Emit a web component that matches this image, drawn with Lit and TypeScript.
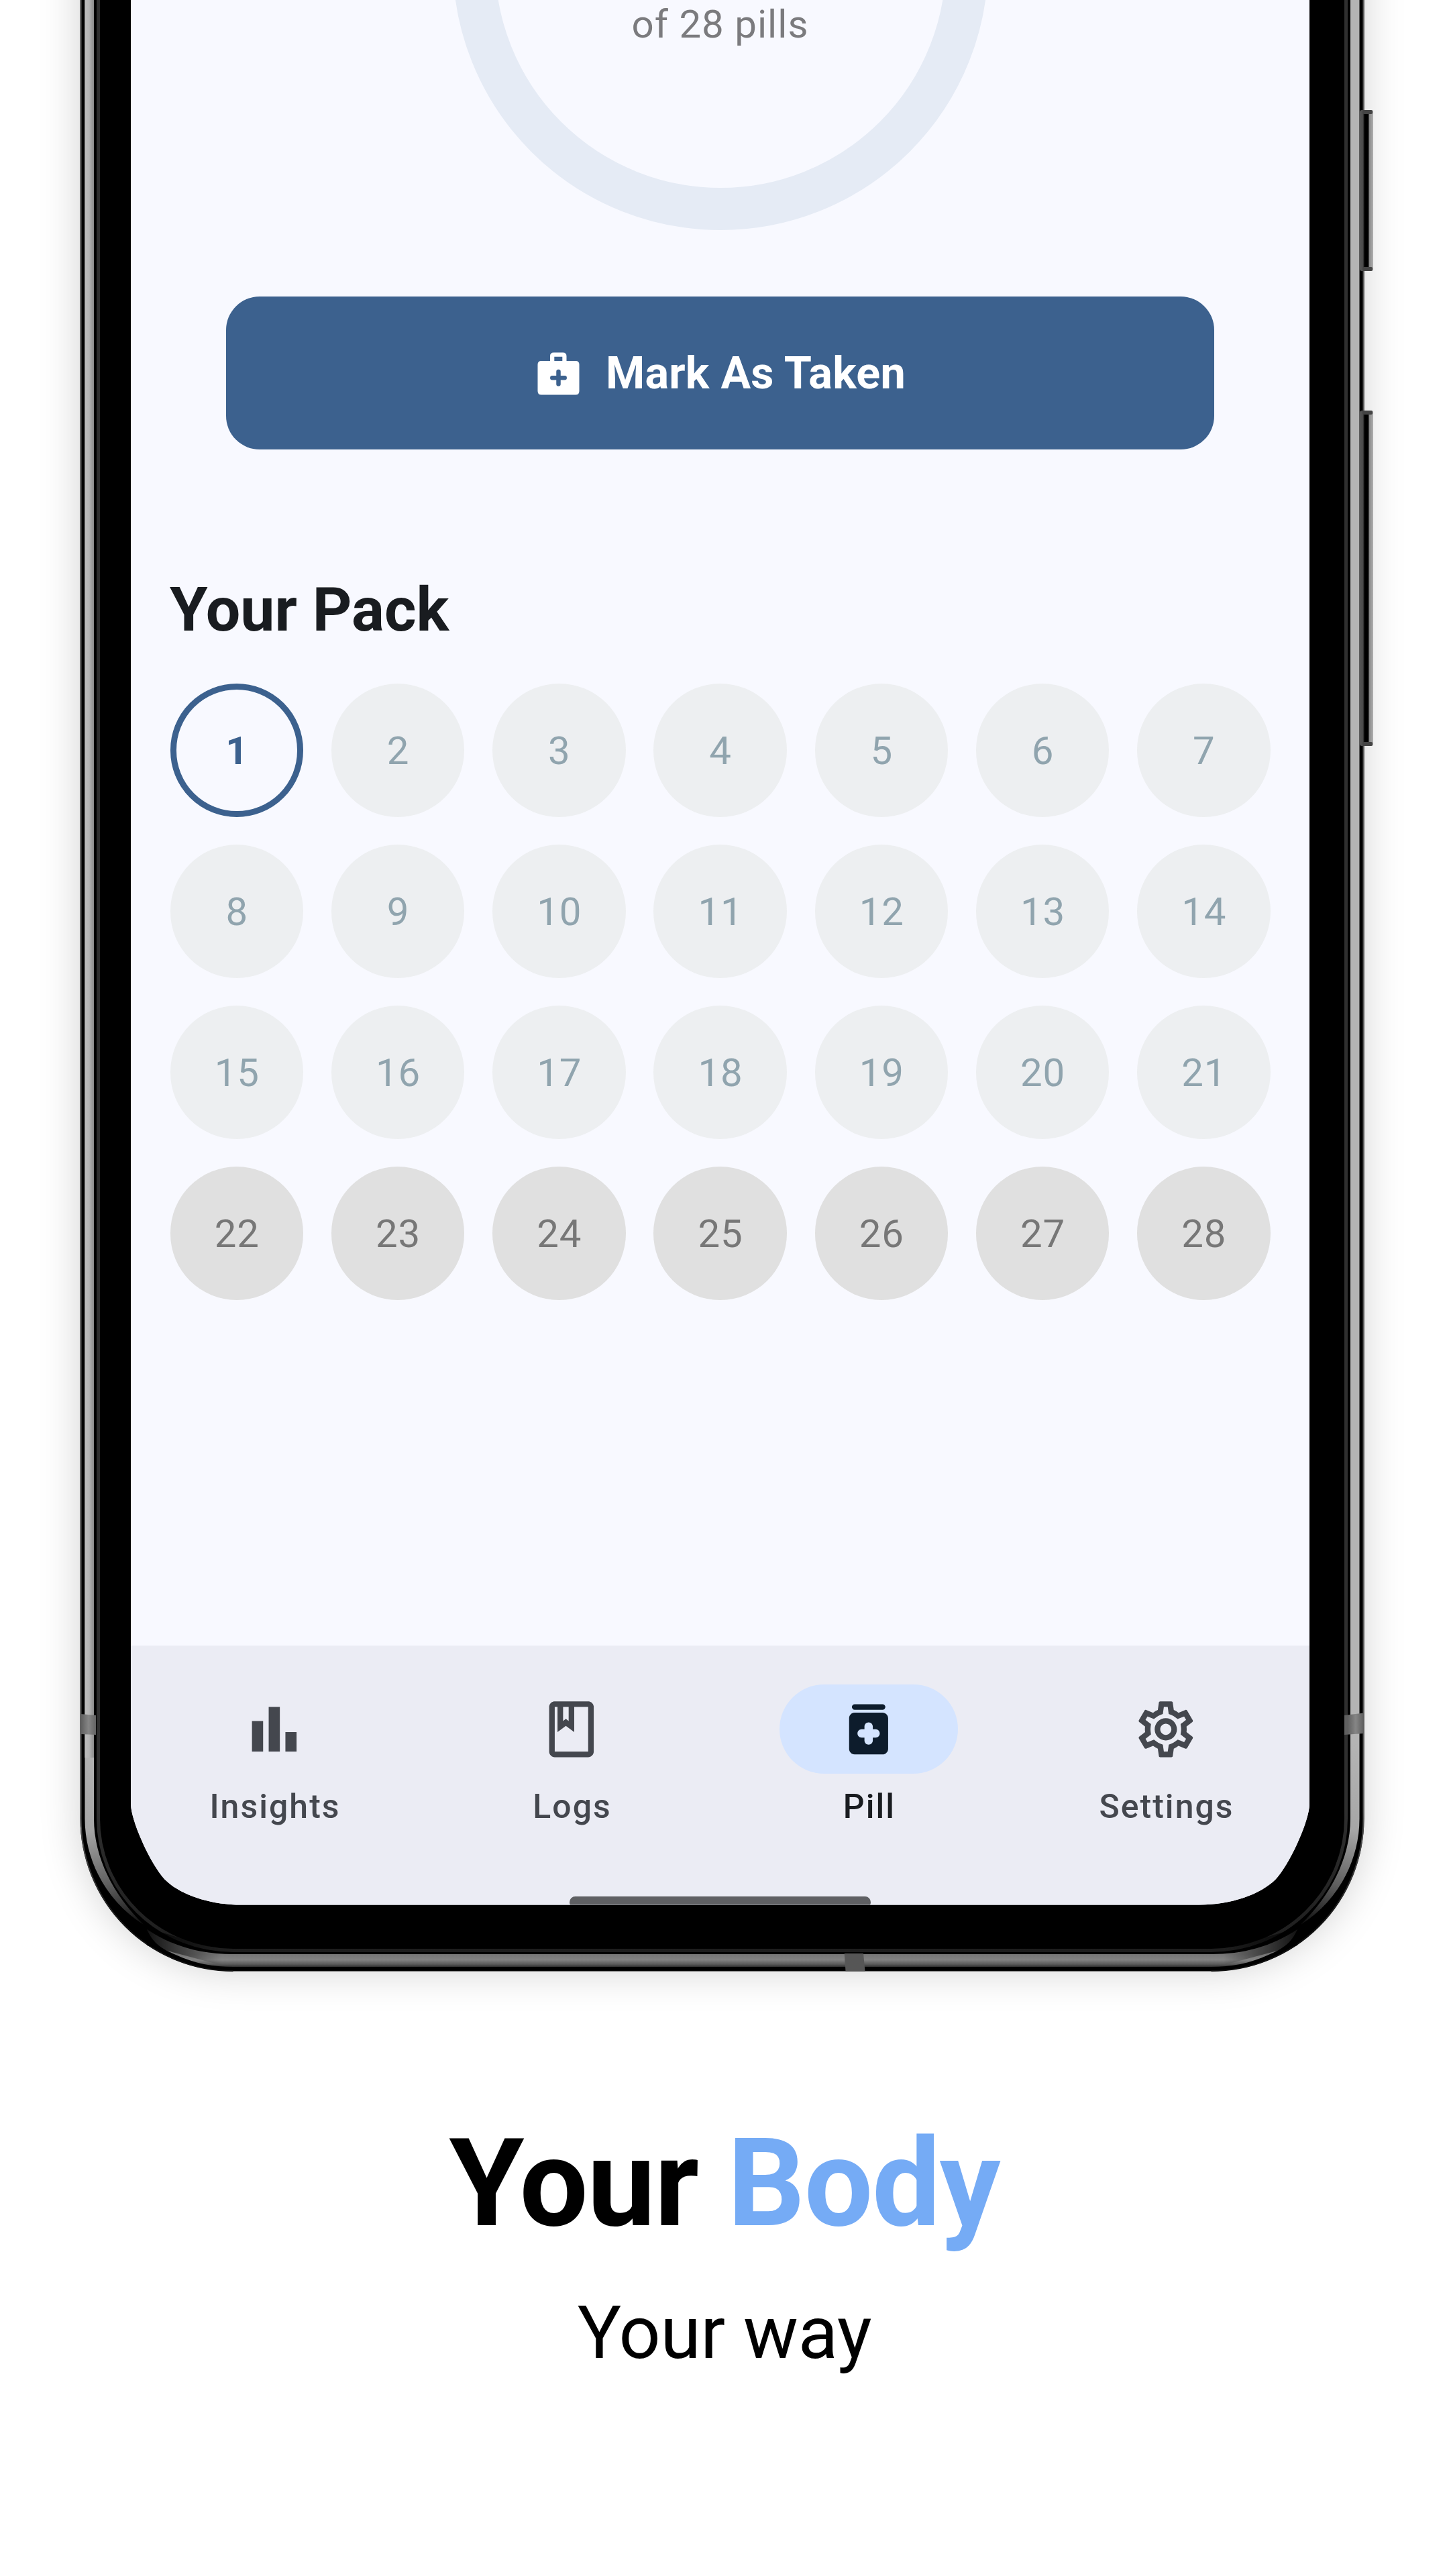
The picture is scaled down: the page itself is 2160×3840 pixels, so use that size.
import { LitElement, html, svg, css } from "lit";
import { customElement, property } from "lit/decorators.js";
import { classMap } from "lit/directives/class-map.js";

const TOTAL_PILLS = 28;
const PLACEBO_FROM = 22;
const CURRENT_PILL = 1;

const icons: Record<string, unknown> = {
  insights: svg`<path d="M4 9h4v11H4zM10 4h4v16h-4zM16 13h4v7h-4z"/>`,
  logs: svg`<path d="M18 2H6c-1.1 0-2 .9-2 2v16c0 1.1.9 2 2 2h12c1.1 0 2-.9 2-2V4c0-1.1-.9-2-2-2zM9 4h2v5l-1-.75L9 9V4zm9 16H6V4h1v9l3-2.25L13 13V4h5v16z"/>`,
  pill: svg`<rect x="6" y="3" width="12" height="2" rx="1"/><path fill-rule="evenodd" d="M17 6H7c-1.1 0-2 .9-2 2v11c0 1.1.9 2 2 2h10c1.1 0 2-.9 2-2V8c0-1.1-.9-2-2-2zm-2.5 9h-1v1c0 .83-.67 1.5-1.5 1.5s-1.5-.67-1.5-1.5v-1h-1C8.670 15 8 14.330 8 13.500S8.670 12 9.500 12h1v-1c0-.83.67-1.500 1.500-1.500s1.500.67 1.500 1.500v1h1c.83 0 1.500.67 1.500 1.500s-.67 1.500-1.500 1.500z"/>`,
  settings: svg`<path d="M19.430 12.980c.04-.32.07-.64.07-.98 0-.34-.03-.66-.07-.98l2.110-1.650c.19-.15.24-.42.12-.64l-2-3.460c-.09-.16-.26-.25-.44-.25-.06 0-.12.01-.17.03l-2.490 1c-.52-.4-1.080-.73-1.690-.98l-.38-2.650C14.460 2.180 14.250 2 14 2h-4c-.25 0-.46.18-.49.42l-.38 2.650c-.61.25-1.170.59-1.690.98l-2.490-1c-.06-.02-.12-.03-.18-.03-.17 0-.34.09-.43.25l-2 3.460c-.13.22-.07.49.12.64l2.110 1.650c-.04.32-.07.65-.07.98 0 .33.03.66.07.98l-2.110 1.650c-.19.15-.24.42-.12.64l2 3.460c.09.16.26.25.44.25.06 0 .12-.01.17-.03l2.490-1c.52.4 1.080.73 1.690.98l.38 2.650c.03.24.24.42.49.42h4c.25 0 .46-.18.49-.42l.38-2.650c.61-.25 1.170-.59 1.690-.98l2.490 1c.06.02.12.03.18.03.17 0 .34-.09.43-.25l2-3.460c.12-.22.07-.49-.12-.64l-2.110-1.650zm-1.980-1.710c.04.31.05.52.05.73 0 .21-.02.43-.05.73l-.14 1.130.89.7 1.080.84-.7 1.210-1.270-.51-1.040-.42-.9.68c-.43.32-.84.56-1.250.73l-1.060.43-.16 1.130-.2 1.350h-1.400l-.19-1.350-.16-1.130-1.060-.43c-.43-.18-.83-.41-1.230-.71l-.91-.7-1.060.43-1.270.51-.7-1.210 1.080-.84.89-.7-.14-1.130c-.03-.31-.05-.54-.05-.74s.02-.43.05-.73l.14-1.130-.89-.7-1.080-.84.7-1.210 1.270.51 1.040.42.9-.68c.43-.32.84-.56 1.250-.73l1.060-.43.16-1.130.2-1.350h1.390l.19 1.350.16 1.130 1.060.43c.43.18.83.41 1.230.71l.91.7 1.060-.43 1.270-.51.7 1.210-1.070.85-.89.7.14 1.130zM12 8c-2.210 0-4 1.790-4 4s1.790 4 4 4 4-1.790 4-4-1.790-4-4-4zm0 6c-1.100 0-2-.9-2-2s.9-2 2-2 2 .9 2 2-.9 2-2 2z"/>`,
};

/* Metal shell of the device: black body with polished highlights. */
@customElement("device-shell")
class DeviceShell extends LitElement {
  static styles = css`
    :host { display: block; }
    svg { display: block; overflow: visible; }
  `;

  private corner() {
    return svg`
      <path fill="none" stroke="url(#rimFade)" stroke-width="5"
        d="M146.500 -20 V2711 A201 196.500 0 0 0 347.500 2907.500 H1077"/>
      <path fill="url(#sideMetal)"
        d="M126.500 -20 V2711 C126.500 2775 160 2835 214 2869 C170 2826 140 2770 140 2711 V-20 Z"/>
      <path fill="url(#baseMetal)"
        d="M1077 2913 H347.500 C300 2913 258 2902 219 2876 C228 2897 241 2905 262 2914 C290 2927 318 2932 347.500 2932 H1077 Z"/>
      <path fill="none" stroke="url(#edgeFade)" stroke-width="2"
        d="M120.500 -20 V2711 A227 227 0 0 0 347.500 2938"/>
    `;
  }

  render() {
    return html`
      <svg width="2160" height="3000" viewBox="0 0 2160 3000" aria-hidden="true">
        <defs>
          <linearGradient id="sideMetal" gradientUnits="userSpaceOnUse" x1="126" y1="2600" x2="206" y2="2868">
            <stop offset="0" stop-color="#b4b4b4"/>
            <stop offset=".45" stop-color="#a6a6a6"/>
            <stop offset=".75" stop-color="#606060"/>
            <stop offset="1" stop-color="#111"/>
          </linearGradient>
          <linearGradient id="baseMetal" gradientUnits="userSpaceOnUse" x1="0" y1="2913" x2="0" y2="2932">
            <stop offset="0" stop-color="#757575"/>
            <stop offset=".45" stop-color="#828282"/>
            <stop offset=".8" stop-color="#5a5a5a"/>
            <stop offset="1" stop-color="#303030"/>
          </linearGradient>
          <linearGradient id="cornerShade" gradientUnits="userSpaceOnUse" x1="219" y1="0" x2="330" y2="0">
            <stop offset="0" stop-color="#000" stop-opacity=".85"/>
            <stop offset="1" stop-color="#000" stop-opacity="0"/>
          </linearGradient>
          <linearGradient id="rimFade" gradientUnits="userSpaceOnUse" x1="0" y1="2700" x2="0" y2="2908">
            <stop offset="0" stop-color="#2f2f2f"/>
            <stop offset="1" stop-color="#1d1d1d"/>
          </linearGradient>
          <linearGradient id="edgeFade" gradientUnits="userSpaceOnUse" x1="0" y1="2700" x2="0" y2="2880">
            <stop offset="0" stop-color="#5a5a5a"/>
            <stop offset="1" stop-color="#111"/>
          </linearGradient>
          <linearGradient id="bandSide" gradientUnits="userSpaceOnUse" x1="120" y1="0" x2="144" y2="0">
            <stop offset="0" stop-color="#5c5c5c"/>
            <stop offset=".5" stop-color="#868686"/>
            <stop offset="1" stop-color="#606060"/>
          </linearGradient>
          <linearGradient id="sideGloss" gradientUnits="userSpaceOnUse" x1="126" y1="0" x2="140" y2="0">
            <stop offset="0" stop-color="#bebebe"/>
            <stop offset=".5" stop-color="#b4b4b4"/>
            <stop offset="1" stop-color="#8c8c8c"/>
          </linearGradient>
          <linearGradient id="keyMetal" x1="0" x2="1">
            <stop offset="0" stop-color="#555"/>
            <stop offset=".24" stop-color="#4a4a4a"/>
            <stop offset=".36" stop-color="#000"/>
            <stop offset=".62" stop-color="#000"/>
            <stop offset=".72" stop-color="#8a8a8a"/>
            <stop offset="1" stop-color="#b0b0b0"/>
          </linearGradient>
        </defs>
        <path d="M119.500 -20 V2710.500 A228 228 0 0 0 347.500 2938.500 H1805.500 A228 228 0 0 0 2033.500 2710.500 V-20 Z"/>
        ${this.corner()}
        <g transform="translate(2153 0) scale(-1 1)">${this.corner()}</g>
        <rect x="126.500" y="-20" width="13.500" height="2640" fill="url(#sideGloss)"/>
        <path fill="url(#cornerShade)" d="M219 2874 L347 2912 V2934 L219 2900 Z"/>
        <path fill="url(#cornerShade)" transform="translate(2153 0) scale(-1 1)" d="M219 2874 L347 2912 V2934 L219 2900 Z"/>
        <path fill="url(#bandSide)" d="M120 2555 L143 2557 V2586 L120 2585 Z"/>
        <path fill="url(#bandSide)" transform="translate(2153 0) scale(-1 1)" d="M120 2553.500 L149 2557 V2586 L120 2584 Z"/>
        <path fill="#565656" d="M1258.700 2912 H1287 L1289.500 2938.500 H1260.500 Z"/>
        ${[[164, 404], [612, 1112]].map(([top, bottom]) => svg`
          <rect x="2027" y=${top} width="20" height=${bottom - top} rx="3" fill="url(#keyMetal)"/>
          <rect x="2031" y=${top} width="15" height="6" rx="2" fill="#444"/>
          <rect x="2031" y=${bottom - 6} width="15" height="6" rx="2" fill="#444"/>
        `)}
      </svg>
    `;
  }
}

@customElement("nav-tab")
class NavTab extends LitElement {
  @property() label = "";
  @property() icon = "";
  @property({ type: Boolean }) active = false;

  static styles = css`
    :host { display: block; width: 428px; }
    .tab {
      display: flex; flex-direction: column; align-items: center; gap: 25px;
      color: #44474e; font: 500 49.900px/1 Roboto, sans-serif; letter-spacing: 2.080px;
    }
    .indicator {
      display: flex; align-items: center; justify-content: center;
      width: 266px; height: 133.400px; border-radius: 67px;
    }
    .label { padding-left: 2px; }
    .active { color: #191c20; }
    .active .indicator { background: #d4e4ff; color: #0d1c2c; }
    svg { width: 99.700px; height: 99.700px; fill: currentColor; }
  `;

  render() {
    return html`
      <div class=${classMap({ tab: true, active: this.active })}>
        <div class="indicator"><svg viewBox="0 0 24 24">${icons[this.icon]}</svg></div>
        <span class="label">${this.label}</span>
      </div>
    `;
  }
}

@customElement("app-root")
class AppRoot extends LitElement {
  static styles = css`
    :host {
      display: block; width: 2160px; height: 3840px; overflow: hidden;
      background: #fff; font-family: Roboto, sans-serif; color: #000;
    }
    .phone { position: relative; height: 2938.500px; padding: 0 208px 0 195px; box-sizing: border-box; }
    .shadow {
      position: absolute; left: 120px; right: 127px; top: -300px; bottom: 1px;
      border-radius: 228px; box-shadow: 0 0 62px rgba(0, 0, 0, .18);
    }
    device-shell { position: absolute; inset: 0; }
    .screen {
      position: relative; display: flex; flex-direction: column; align-items: center;
      width: 1757px; height: 2839.500px; background: #f8f9ff; overflow: hidden;
      clip-path: path("M0 0 H1757 V2690 C1756 2716 1728 2778 1706.500 2801.500 C1684 2824 1640 2839.500 1592 2839.500 H165 C117 2839.500 73 2824 50.500 2801.500 C29 2778 1 2716 0 2690 Z");
    }
    .ring {
      display: flex; align-items: flex-end; justify-content: center; flex: none;
      box-sizing: border-box; width: 798px; height: 798px; margin-top: -455px;
      padding-bottom: 215px; border: 63px solid #e5ebf5; border-radius: 50%;
      font-size: 58.200px; line-height: 1; letter-spacing: 1px; color: #7b7b7e;
    }
    .take {
      display: flex; align-items: center; justify-content: center; gap: 39px; flex: none;
      box-sizing: border-box;
      width: 1473.500px; height: 228.300px; margin-top: 99px; border: 0; padding: 1px 0 0 4px;
      border-radius: 50px; background: #3c618e; color: #fff;
      font: 700 66.500px/1 Roboto, sans-serif; letter-spacing: .25px;
    }
    .take svg { width: 63px; height: 64px; }
    .pack { align-self: stretch; margin: 193px 58px 0; }
    .title { margin: 0 0 64.500px; font-size: 91.400px; line-height: 1; font-weight: 700; color: #191c20; }
    .grid { display: grid; grid-template-columns: repeat(7, 198.500px); justify-content: space-between; row-gap: 41.600px; padding: 0 .5px; }
    .dot {
      display: flex; align-items: center; justify-content: center; box-sizing: border-box;
      height: 198.500px; padding: 1.500px 0 0 1px; border-radius: 50%; background: #edeff1; color: #90a4ae;
      font-size: 58.200px; line-height: 1; letter-spacing: .8px;
    }
    .placebo { background: #e0e0e0; color: #777; }
    .current { background: none; border: 9px solid #3c618e; color: #3c618e; font-weight: 700; }
    .nav {
      display: flex; align-self: stretch; justify-content: space-between; box-sizing: border-box;
      height: 386.500px; margin-top: auto; padding-top: 58px; background: #ebecf4;
    }
    .home {
      position: absolute; left: 654px; bottom: -4px; width: 449px; height: 17px;
      border-radius: 9px; background: #5f6063;
    }
    .caption { display: flex; flex-direction: column; align-items: center; gap: 77.800px; padding-top: 226.500px; line-height: 1; }
    .headline { margin: 0; font-size: 181px; font-weight: 700; letter-spacing: -1.200px; }
    .accent { color: #75abf5; }
    .sub { margin: 0; font-size: 109px; letter-spacing: -.2px; }
  `;

  render() {
    const pills = Array.from({ length: TOTAL_PILLS }, (_, i) => i + 1);
    return html`
      <div class="phone">
        <div class="shadow"></div>
        <device-shell></device-shell>
        <main class="screen">
          <div class="ring"><span>of ${TOTAL_PILLS} pills</span></div>
          <button class="take">
            <svg viewBox="0 0 63 64" aria-hidden="true">
              <path fill="#fff" fill-rule="evenodd"
                d="M19 13 V6 Q19 0.500 24.500 0.500 H38 Q43.500 0.500 43.500 6 V13 H57 Q62.500 13 62.500 18.500 V58 Q62.500 63.500 57 63.500 H6 Q0.500 63.500 0.500 58 V18.500 Q0.500 13 6 13 Z M25.300 6.700 V13 H37.300 V6.700 Z"/>
              <path d="M31.500 29 V47.500 M22.300 38.200 H40.700" stroke="#3c618e" stroke-width="6.500" stroke-linecap="round"/>
            </svg>
            <span>Mark As Taken</span>
          </button>
          <section class="pack">
            <h2 class="title">Your Pack</h2>
            <div class="grid">
              ${pills.map((n) => html`
                <div class=${classMap({ dot: true, current: n === CURRENT_PILL, placebo: n >= PLACEBO_FROM })}>${n}</div>
              `)}
            </div>
          </section>
          <nav class="nav">
            <nav-tab label="Insights" icon="insights"></nav-tab>
            <nav-tab label="Logs" icon="logs"></nav-tab>
            <nav-tab label="Pill" icon="pill" active></nav-tab>
            <nav-tab label="Settings" icon="settings"></nav-tab>
          </nav>
          <div class="home"></div>
        </main>
      </div>
      <div class="caption">
        <h1 class="headline">Your <span class="accent">Body</span></h1>
        <p class="sub">Your way</p>
      </div>
    `;
  }
}
